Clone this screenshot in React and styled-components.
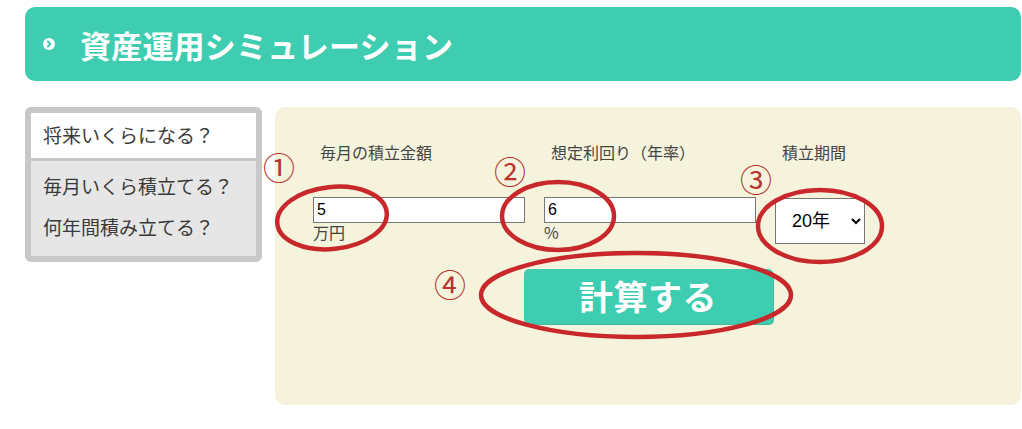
import React from "react";
import styled, { createGlobalStyle } from "styled-components";

const Global = createGlobalStyle`
  html, body { margin: 0; padding: 0; background: #ffffff; }
  body { font-family: "Noto Sans CJK JP", "Noto Sans", sans-serif; }
`;

const Page = styled.div`
  position: relative;
  width: 1022px;
  height: 429px;
  box-sizing: border-box;
  padding: 7px 1px 0 25px;
  overflow: hidden;
`;

const Header = styled.header`
  height: 74px;
  box-sizing: border-box;
  background: #3ecdb0;
  border-radius: 10px;
  display: flex;
  align-items: center;
  padding-left: 18px;
  gap: 25px;
`;

const Title = styled.h1`
  margin: 0;
  color: #ffffff;
  font-family: "Noto Sans CJK JP", sans-serif;
  font-size: 31px;
  font-weight: 700;
  line-height: 1;
  letter-spacing: 0.2px;
`;

const Body = styled.div`
  margin-top: 26px;
  display: flex;
  gap: 13px;
  align-items: flex-start;
`;

const Sidebar = styled.nav`
  width: 237px;
  height: 155px;
  box-sizing: border-box;
  border: 6px solid #c8c8c8;
  border-radius: 6px;
  background: #e6e6e6;
  display: flex;
  flex-direction: column;
`;

const TabActive = styled.div`
  height: 45px;
  line-height: 43px;
  background: #ffffff;
  border-bottom: 3px solid #c8c8c8;
  padding-left: 12px;
  font-size: 19px;
  color: #3a3a3a;
`;

const TabList = styled.div`
  padding: 5px 0 8px;
`;

const Tab = styled.div`
  height: 41px;
  line-height: 39px;
  padding-left: 12px;
  font-size: 19px;
  color: #3a3a3a;
`;

const Panel = styled.section`
  flex: 1;
  height: 298px;
  box-sizing: border-box;
  background: #f5f3dc;
  border-radius: 10px;
  padding-top: 35px;
`;

const Fields = styled.div`
  margin-left: 38px;
  display: grid;
  grid-template-columns: 212px 212px auto;
  column-gap: 19px;
  row-gap: 35px;
  align-items: start;
`;

const Label = styled.div`
  padding-left: 7px;
  font-size: 16px;
  line-height: 20px;
  color: #444444;
`;

const Field = styled.div`
  display: flex;
  flex-direction: column;
`;

const TextInput = styled.input`
  width: 212px;
  height: 26px;
  box-sizing: border-box;
  border: 1px solid #767676;
  background: #ffffff;
  padding: 1px 3px;
  font-family: "Liberation Sans", Arial, sans-serif;
  font-size: 16px;
  color: #000;
  outline: none;
  margin: 0;
`;

const Unit = styled.span`
  font-size: 16px;
  line-height: 19px;
  color: #444444;
`;

const Select = styled.select`
  width: 90px;
  height: 46px;
  margin-top: 1px;
  box-sizing: border-box;
  border: 1px solid #767676;
  border-radius: 0;
  background: #ffffff;
  padding: 0 6px 0 12px;
  font-family: "Liberation Sans", "Noto Sans CJK JP", sans-serif;
  font-size: 18px;
  color: #000;
`;

const ButtonRow = styled.div`
  margin-top: 25px;
  display: flex;
  justify-content: center;
`;

const CalcButton = styled.button`
  width: 249px;
  height: 55px;
  border: none;
  border-radius: 5px;
  background: #3ecdb0;
  box-shadow: 1px 1px 0 #4bb59c;
  color: #ffffff;
  font-family: "Noto Sans CJK JP", sans-serif;
  font-size: 34px;
  font-weight: 700;
  line-height: 1;
  letter-spacing: 0.5px;
  cursor: pointer;
  padding: 0 0 2px;
`;

const Overlay = styled.svg`
  position: absolute;
  left: 0;
  top: 0;
  pointer-events: none;
`;

const Marker = styled.span`
  position: absolute;
  left: ${(p) => p.$x}px;
  top: ${(p) => p.$y}px;
  width: 32px;
  height: 32px;
  font-family: "Noto Sans CJK JP", sans-serif;
  font-size: 32px;
  font-weight: 400;
  line-height: 32px;
  text-align: center;
  color: #b8332c;
  pointer-events: none;
`;

const HeaderIcon = () => (
  <svg width="12" height="12" viewBox="0 0 12 12">
    <circle cx="6" cy="6" r="6" fill="#ffffff" />
    <path d="M4.9 3.5 L7.3 6 L4.9 8.5" fill="none" stroke="#3ecdb0" strokeWidth="2" strokeLinecap="round" strokeLinejoin="round" />
  </svg>
);

const ellipses = [
  { cx: 332, cy: 218, rx: 55, ry: 31, r: -6 },
  { cx: 558, cy: 216, rx: 56, ry: 34, r: 0 },
  { cx: 820, cy: 226, rx: 62, ry: 36, r: 0 },
  { cx: 636, cy: 295, rx: 155, ry: 42, r: 0 },
];

const markers = [
  { t: "①", x: 263, y: 150 },
  { t: "②", x: 494, y: 154 },
  { t: "③", x: 740, y: 162 },
  { t: "④", x: 434, y: 267 },
];

export default function App() {
  return (
    <>
      <Global />
      <Page>
        <Header>
          <HeaderIcon />
          <Title>資産運用シミュレーション</Title>
        </Header>
        <Body>
          <Sidebar>
            <TabActive>将来いくらになる？</TabActive>
            <TabList>
              <Tab>毎月いくら積立てる？</Tab>
              <Tab>何年間積み立てる？</Tab>
            </TabList>
          </Sidebar>
          <Panel>
            <Fields>
              <Label>毎月の積立金額</Label>
              <Label>想定利回り（年率）</Label>
              <Label>積立期間</Label>
              <Field>
                <TextInput defaultValue="5" />
                <Unit>万円</Unit>
              </Field>
              <Field>
                <TextInput defaultValue="6" />
                <Unit>%</Unit>
              </Field>
              <Field>
                <Select defaultValue="20">
                  <option value="10">10年</option>
                  <option value="20">20年</option>
                  <option value="30">30年</option>
                </Select>
              </Field>
            </Fields>
            <ButtonRow>
              <CalcButton>計算する</CalcButton>
            </ButtonRow>
          </Panel>
        </Body>
        <Overlay width="1022" height="429" viewBox="0 0 1022 429">
          {ellipses.map((e, i) => (
            <ellipse
              key={i}
              cx={e.cx}
              cy={e.cy}
              rx={e.rx}
              ry={e.ry}
              transform={`rotate(${e.r} ${e.cx} ${e.cy})`}
              fill="none"
              stroke="#c8282b"
              strokeWidth="4.5"
            />
          ))}
        </Overlay>
        {markers.map((m) => (
          <Marker key={m.t} $x={m.x} $y={m.y}>
            {m.t}
          </Marker>
        ))}
      </Page>
    </>
  );
}
